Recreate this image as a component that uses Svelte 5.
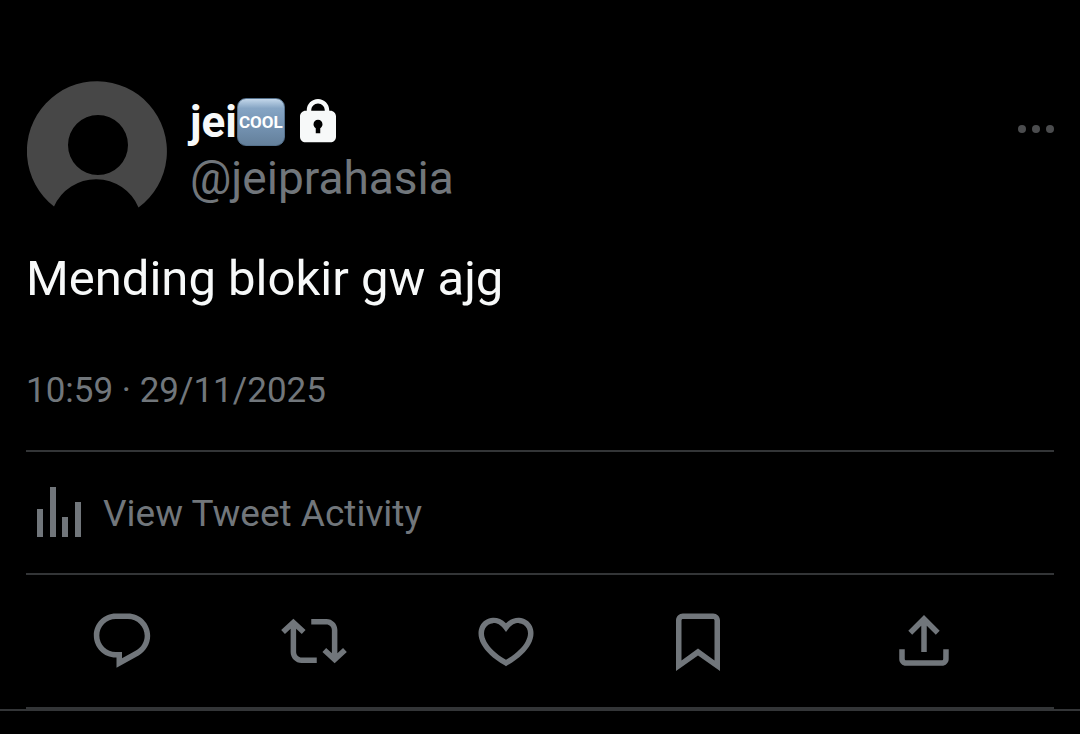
<script>
  const actions = [
    {
      label: 'Reply',
      path: 'M1.751 10c0-4.42 3.584-8 8.005-8h4.366c4.49 0 8.129 3.64 8.129 8.13 0 2.96-1.607 5.68-4.196 7.11l-8.054 4.46v-3.69h-.067c-4.49.1-8.183-3.51-8.183-8.01zm8.005-6c-3.317 0-6.005 2.69-6.005 6 0 3.37 2.77 6.08 6.138 6.01l.351-.01h1.761v2.3l5.087-2.81c1.951-1.08 3.163-3.13 3.163-5.36 0-3.39-2.744-6.13-6.129-6.13H9.756z'
    },
    {
      label: 'Retweet',
      path: 'M4.5 3.88l4.432 4.14-1.364 1.46L5.5 7.55V16c0 1.1.896 2 2 2H13v2H7.5c-2.209 0-4-1.79-4-4V7.55L1.432 9.48.068 8.02 4.5 3.88zM16.5 6H11V4h5.5c2.209 0 4 1.79 4 4v8.45l2.068-1.93 1.364 1.46-4.432 4.14-4.432-4.14 1.364-1.46 2.068 1.93V8c0-1.1-.896-2-2-2z'
    },
    {
      label: 'Like',
      path: 'M16.697 5.5c-1.222-.06-2.679.51-3.89 2.16l-.805 1.09-.806-1.09C9.984 6.01 8.526 5.44 7.304 5.5c-1.243.07-2.349.78-2.91 1.91-.552 1.12-.633 2.78.479 4.82 1.074 1.97 3.257 4.27 7.129 6.61 3.87-2.34 6.052-4.64 7.126-6.61 1.111-2.04 1.03-3.7.477-4.82-.561-1.13-1.666-1.84-2.908-1.91zm4.187 7.69c-1.351 2.48-4.001 5.12-8.379 7.67l-.503.3-.504-.3c-4.379-2.55-7.029-5.19-8.382-7.67-1.36-2.5-1.41-4.86-.514-6.67.887-1.79 2.647-2.91 4.601-3.01 1.651-.09 3.368.56 4.798 2.01 1.429-1.45 3.146-2.1 4.796-2.01 1.954.1 3.714 1.22 4.601 3.01.896 1.81.846 4.17-.514 6.67z'
    },
    {
      label: 'Bookmark',
      path: 'M4 4.5C4 3.12 5.119 2 6.5 2h11C18.881 2 20 3.12 20 4.5v18.44l-8-5.71-8 5.71V4.5zM6.5 4c-.276 0-.5.22-.5.5v14.56l6-4.29 6 4.29V4.5c0-.28-.224-.5-.5-.5h-11z'
    },
    {
      label: 'Share',
      path: 'M12 2.59l5.7 5.7-1.41 1.42L13 6.41V16h-2V6.41l-3.3 3.3-1.41-1.42L12 2.59zM21 15l-.02 3.51c0 1.38-1.12 2.49-2.5 2.49H5.5C4.11 21 3 19.88 3 18.5V15h2v3.5c0 .28.22.5.5.5h12.98c.28 0 .5-.22.5-.5L19 15h2z'
    }
  ];
</script>

<article class="tweet">
  <header>
    <a class="avatar" href="#profile" aria-label="Profile">
      <svg viewBox="0 0 140 127" width="140" height="127" aria-hidden="true">
        <path fill="#474747" fill-rule="evenodd" d="M27 125.500A70 70 0 1 1 111.500 126.500A46 46 0 0 0 27 125.500ZM71 34a30 30 0 1 0 0 60a30 30 0 1 0 0-60Z" />
      </svg>
    </a>
    <div class="who">
      <a class="name" href="#profile">
        <span>jei</span><span class="cool">COOL</span>
        <svg class="lock" viewBox="0 0 24 24" aria-hidden="true">
          <path d="M17.500 7H17v-.250c0-2.760-2.240-5-5-5s-5 2.240-5 5V7h-.500C5.120 7 4 8.120 4 9.500v9C4 19.880 5.120 21 6.500 21h11c1.390 0 2.500-1.120 2.500-2.500v-9C20 8.120 18.890 7 17.500 7zM13 14.730V17h-2v-2.270c-.590-.340-1-.990-1-1.730 0-1.100.900-2 2-2 1.110 0 2 .900 2 2 0 .740-.400 1.390-1 1.730zM15 7H9v-.250c0-1.660 1.350-3 3-3 1.660 0 3 1.340 3 3V7z" />
        </svg>
      </a>
      <a class="handle" href="#profile">@jeiprahasia</a>
    </div>
    <button class="more" aria-label="More">
      <svg viewBox="0 0 36 8" width="36" height="8" aria-hidden="true">
        <circle cx="4" cy="4" r="4" /><circle cx="18" cy="4" r="4" /><circle cx="32" cy="4" r="4" />
      </svg>
    </button>
  </header>

  <p class="text">Mending blokir gw ajg</p>
  <time datetime="2025-11-29T10:59">10:59 · 29/11/2025</time>

  <a class="activity" href="#activity">
    <svg viewBox="0 0 44 50" width="44" height="50" aria-hidden="true">
      <path d="M0 22h6v28H0zM13 0h6v50h-6zM25 30h6v20h-6zM38 15h6v35h-6z" />
    </svg>
    <span>View Tweet Activity</span>
  </a>

  <div class="actions">
    {#each actions as action}
      <button aria-label={action.label}>
        <svg viewBox="0 0 24 24" aria-hidden="true"><path d={action.path} /></svg>
      </button>
    {/each}
  </div>
</article>

<style>
  :global(body) {
    margin: 0;
    background: #000;
  }

  .tweet {
    padding: 81px 26px 0;
    border-bottom: 2px solid #333537;
    font-family: Roboto, 'Liberation Sans', sans-serif;
    color: #71767b;
  }

  a {
    color: inherit;
    text-decoration: none;
  }

  button {
    padding: 0;
    border: 0;
    background: none;
    color: inherit;
    cursor: pointer;
  }

  svg {
    display: block;
    fill: currentColor;
  }

  header {
    display: flex;
    align-items: flex-start;
  }

  .avatar {
    margin: 0 23px 0 1px;
  }

  .who {
    flex: 1;
    padding-top: 14px;
  }

  .name {
    display: flex;
    align-items: center;
    height: 54px;
    font-size: 44px;
    font-weight: 700;
    color: #f7f9f9;
  }

  .cool {
    display: grid;
    place-items: center;
    box-sizing: border-box;
    width: 48px;
    height: 48px;
    border: 1px solid #55718c;
    border-radius: 9px;
    background: linear-gradient(#c3d7ea, #86a5c4 20%, #7897b7 50%, #64809b);
    font-size: 17px;
    color: #fff;
  }

  .lock {
    width: 54px;
    height: 54px;
    margin-left: 6px;
  }

  .handle {
    display: block;
    font-size: 46px;
    line-height: 58px;
  }

  .more {
    padding: 44px 0 8px;
    color: #4b4c4e;
  }

  .text {
    margin: 38px 0 0;
    font-size: 49px;
    line-height: 66px;
    color: #f7f9f9;
  }

  time {
    display: block;
    padding: 55px 0 35px;
    font-size: 35px;
    line-height: 48px;
  }

  .activity {
    display: flex;
    align-items: center;
    gap: 22px;
    padding: 35px 11px 36px;
    border: solid #333537;
    border-width: 2px 0;
    font-size: 37px;
    line-height: 46px;
  }

  .activity span {
    padding-top: 4px;
  }

  .actions {
    display: grid;
    grid-template-columns: repeat(4, 192fr) 260fr;
    justify-items: center;
    padding: 33px 0;
    border-bottom: 2px solid #333537;
  }

  .actions svg {
    width: 66px;
    height: 66px;
  }
</style>
